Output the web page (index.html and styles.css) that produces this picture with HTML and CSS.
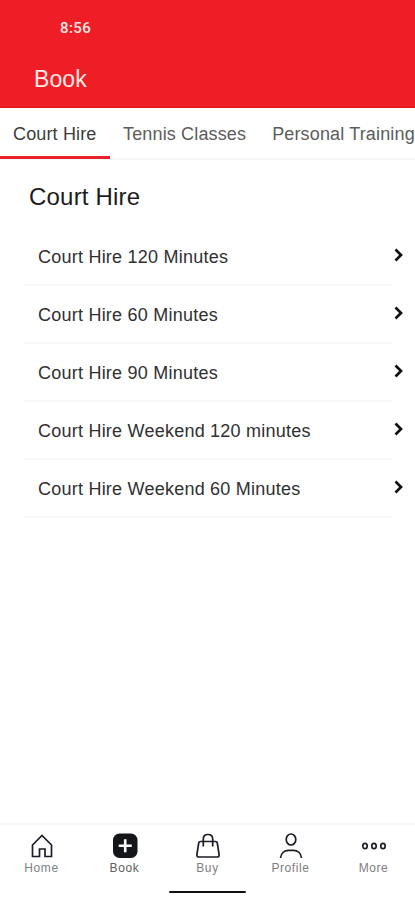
FILE: index.html
```html
<!DOCTYPE html>
<html lang="en">
<head>
<meta charset="utf-8">
<title>Book</title>
<link rel="stylesheet" href="styles.css">
</head>
<body>
<div class="app">
  <header class="header">
    <div class="time">8:56</div>
    <h1 class="heading">Book</h1>
  </header>
  <nav class="tabs">
    <a class="tab active">Court Hire</a>
    <a class="tab">Tennis Classes</a>
    <a class="tab">Personal Training</a>
  </nav>
  <main class="content">
    <h2 class="section">Court Hire</h2>
    <ul class="list">
      <li class="row"><span>Court Hire 120 Minutes</span><svg class="chevron" viewBox="0 0 10 14"><path d="M1.500 1.500 7 7 1.500 12.500"/></svg></li>
      <li class="row"><span>Court Hire 60 Minutes</span><svg class="chevron" viewBox="0 0 10 14"><path d="M1.500 1.500 7 7 1.500 12.500"/></svg></li>
      <li class="row"><span>Court Hire 90 Minutes</span><svg class="chevron" viewBox="0 0 10 14"><path d="M1.500 1.500 7 7 1.500 12.500"/></svg></li>
      <li class="row"><span>Court Hire Weekend 120 minutes</span><svg class="chevron" viewBox="0 0 10 14"><path d="M1.500 1.500 7 7 1.500 12.500"/></svg></li>
      <li class="row"><span>Court Hire Weekend 60 Minutes</span><svg class="chevron" viewBox="0 0 10 14"><path d="M1.500 1.500 7 7 1.500 12.500"/></svg></li>
    </ul>
  </main>
  <footer class="footer">
    <nav class="bottom">
      <a class="item"><svg class="icon" viewBox="0 0 28 28"><path d="M4.500 13 14 3.500l9.500 9.500V24.500H17V17h-5.500v7.500h-7z"/></svg><span>Home</span></a>
      <a class="item selected"><svg class="icon" viewBox="0 0 28 28"><rect class="solid" x="2" y="1.500" width="24.500" height="24.500" rx="6.500"/><path class="plus" d="M14.200 7.300v13M7.700 13.800h13"/></svg><span>Book</span></a>
      <a class="item"><svg class="icon" viewBox="0 0 28 28"><path d="M6.500 9.500h15q1.500 0 1.800 1.500l1.800 11.500q.2 2.500-2 2.500H4.900q-2.200 0-2-2.500L4.700 11Q5 9.500 6.500 9.500zM9.300 14.500V7q0-4.500 4.700-4.500T18.700 7v7.500"/></svg><span>Buy</span></a>
      <a class="item"><svg class="icon" viewBox="0 0 28 28"><ellipse cx="14" cy="7.500" rx="4.800" ry="5.500"/><path d="M3.500 26c.5-5 4-7.700 8-7.700h5c4 0 7.500 2.700 8 7.700"/></svg><span>Profile</span></a>
      <a class="item"><svg class="icon" viewBox="0 0 28 28"><ellipse cx="5" cy="14" rx="2.200" ry="2.700"/><ellipse cx="14" cy="14" rx="2.200" ry="2.700"/><ellipse cx="23" cy="14" rx="2.200" ry="2.700"/></svg><span>More</span></a>
    </nav>
    <div class="indicator"></div>
  </footer>
</div>
</body>
</html>
```
FILE: styles.css
```css
* { box-sizing: border-box; }
body { margin: 0; background: #fff; font-family: "Liberation Sans", Arial, sans-serif; color: #222; }
.app { height: 900px; display: flex; flex-direction: column; overflow: hidden; }
.header { height: 108px; flex: none; background: #ef1e26; color: #ffe9e6; border-bottom: 1px solid #e5141a; }
.time { padding: 19px 0 0 60px; font: 500 15px/19px Roboto, sans-serif; letter-spacing: .4px; }
.heading { margin: 28px 0 0 34px; font-size: 23px; line-height: 26px; font-weight: 400; letter-spacing: .1px; }
.tabs { height: 52px; flex: none; display: flex; border-bottom: 2px solid #f5f5f5; white-space: nowrap; }
.tab { flex: none; height: 51px; padding: 16px 13px 0; font-size: 18px; line-height: 21px; letter-spacing: .15px; color: #5c5c5c; }
.tab.active { width: 110px; padding-right: 0; color: #3c3c3c; border-bottom: 3px solid #e8212a; }
.content { flex: 1; }
.section { margin: 23px 0 0 29px; font-size: 24px; line-height: 28px; font-weight: 400; letter-spacing: .2px; color: #1c1c1c; }
.list { list-style: none; margin: 17px 23px 0 24px; padding: 0; }
.row { height: 58px; display: flex; align-items: center; justify-content: space-between; padding: 2px 0 0 14px; border-bottom: 2px solid #f8f8f8; font-size: 18px; letter-spacing: .23px; color: #303030; }
.chevron { width: 10px; height: 14px; flex: none; margin: 0 -12px 4px 0; fill: none; stroke: #111; stroke-width: 2.7; }
.footer { height: 77px; flex: none; border-top: 2px solid #f8f8f8; }
.bottom { height: 66px; display: grid; grid-template-columns: repeat(5, 1fr); }
.item { display: flex; flex-direction: column; align-items: center; padding-top: 7px; font-size: 12px; line-height: 16px; letter-spacing: .6px; color: #808080; }
.item.selected { color: #606060; }
.icon { width: 28px; height: 28px; fill: none; stroke: #1c1d28; stroke-width: 1.7; }
.icon .solid { fill: #15161a; stroke: none; }
.icon .plus { stroke: #fff; stroke-width: 2.6; }
.indicator { width: 77px; height: 2px; margin: 0 auto; background: #111; border-radius: 1px; }
```
